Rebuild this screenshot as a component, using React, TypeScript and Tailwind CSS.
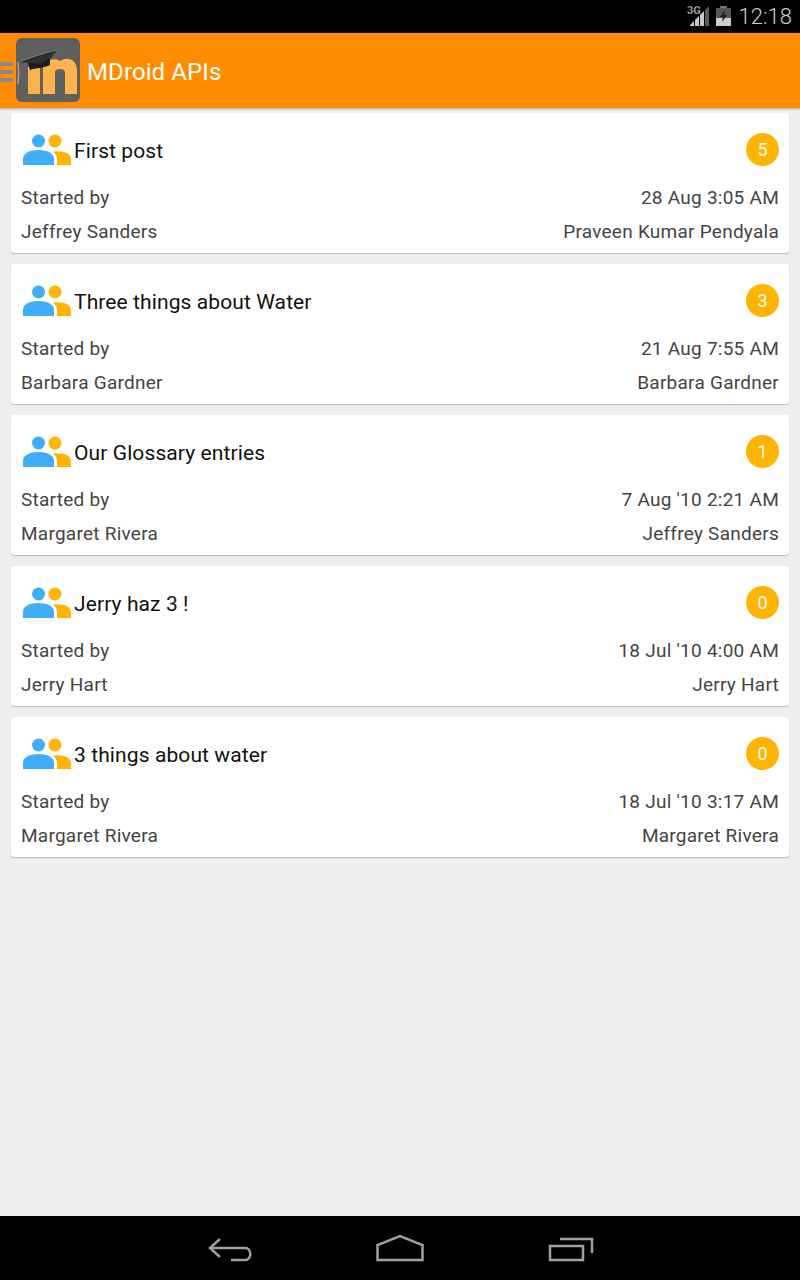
const THREADS = [
  { title: 'First post', count: 5, date: '28 Aug 3:05 AM', starter: 'Jeffrey Sanders', last: 'Praveen Kumar Pendyala' },
  { title: 'Three things about Water', count: 3, date: '21 Aug 7:55 AM', starter: 'Barbara Gardner', last: 'Barbara Gardner' },
  { title: 'Our Glossary entries', count: 1, date: "7 Aug '10 2:21 AM", starter: 'Margaret Rivera', last: 'Jeffrey Sanders' },
  { title: 'Jerry haz 3 !', count: 0, date: "18 Jul '10 4:00 AM", starter: 'Jerry Hart', last: 'Jerry Hart' },
  { title: '3 things about water', count: 0, date: "18 Jul '10 3:17 AM", starter: 'Margaret Rivera', last: 'Margaret Rivera' },
];

function PeopleIcon() {
  return (
    <svg width="48" height="31" viewBox="0 0 48 31" className="shrink-0">
      <circle cx="15.5" cy="7" r="6.5" fill="#3fadf8" />
      <path d="M0 31v-6c0-5 5-9 15.5-9S31 20 31 25v6z" fill="#3fadf8" />
      <circle cx="32" cy="7" r="6.5" fill="#ffb400" />
      <path d="M30 18c1-.6 2-.7 4-.7 9 0 14 3 14 8V31H34v-6c0-3-1.500-5.500-4-7z" fill="#ffb400" />
    </svg>
  );
}

function MoodleLogo() {
  return (
    <svg width="64" height="64" viewBox="0 0 64 64" className="block">
      <rect width="64" height="64" rx="6" fill="#606060" />
      {/* the m */}
      <path d="M12 56V29h12v27z" fill="#fdb44f" />
      <path d="M27 56V26C33 21 40 20 44 23 49 19 61 19 61 33V56H49V34C49 30 39 30 39 34V56z" fill="#fdb44f" />
      {/* the cap */}
      <path d="M12 25 L14 32 C20 30 28 30 34 27 L34 20 Z" fill="#1c1c1c" />
      <path d="M2 24 L41 12 L35 20 L24 26 Z" fill="#2e2e2e" />
      <path d="M2 24 L28 15 L41 12" stroke="#777777" strokeWidth="1" fill="none" />
      <path d="M2 24 C3 32 3 38 2 46" stroke="#b0a080" strokeWidth="1.500" fill="none" />
    </svg>
  );
}

function Status() {
  return (
    <div className="flex h-[33px] items-center justify-end bg-black pr-2">
      <svg width="24" height="22" viewBox="0 0 24 22" className="mr-[6px] -mt-[1px]">
        <path d="M4 21h4v-5l-4 4z M9 21h4V11l-4 4z M14 21h4V6l-4 4z" fill="#c8c8c8" />
        <path d="M19 21h4V1l-4 4z" fill="#5a5a5a" />
        <text x="1" y="9" fontSize="11" fontWeight="700" fill="#c8c8c8" stroke="#000000" strokeWidth="0.300" fontFamily="Roboto, sans-serif">3G</text>
      </svg>
      <svg width="15" height="20" viewBox="0 0 15 20" className="mr-[8px] -mt-[1px]">
        <rect x="4" y="0" width="7" height="2" fill="#777777" />
        <rect x="0" y="2" width="15" height="18" fill="#555555" />
        <rect x="0" y="12" width="15" height="8" fill="#cccccc" />
        <path d="M9 4 4 11h3l-1 5 5-7H8z" fill="#1a1a1a" />
      </svg>
      <span className="font-['Roboto',sans-serif] text-[22px] font-light leading-none text-[#cfcfcf]">12:18</span>
    </div>
  );
}

function ThreadCard({ thread }: { thread: (typeof THREADS)[number] }) {
  return (
    <div className="h-[140px] rounded-[3px] bg-white px-[10px] shadow-[0_1px_1px_#bbbbbb]">
      <div className="flex h-[73px] items-center">
        <div className="ml-[2px] mr-[3px]">
          <PeopleIcon />
        </div>
        <span className="flex-1 pt-[5px] text-[21px] tracking-[0.1px] text-[#111111]">{thread.title}</span>
        <span className="flex h-[33px] w-[33px] items-center justify-center rounded-full bg-[#ffb400] text-[18px] text-white">
          {thread.count}
        </span>
      </div>
      <div className="mt-[3px] flex h-[18px] items-center justify-between text-[19px] tracking-[0.25px] text-[#444444]">
        <span>Started by</span>
        <span>{thread.date}</span>
      </div>
      <div className="mt-[16px] flex h-[18px] items-center justify-between text-[19px] tracking-[0.25px] text-[#444444]">
        <span>{thread.starter}</span>
        <span>{thread.last}</span>
      </div>
    </div>
  );
}

export default function App() {
  return (
    <div className="flex h-[1280px] w-[800px] flex-col bg-[#eeeeee] font-['Roboto',sans-serif]">
      <Status />

      {/* Action bar */}
      <div className="relative flex h-[75px] items-center bg-[#ff8c00] pl-[16px] shadow-[0_1px_2px_#aaaaaa]">
        <div className="absolute left-0 top-[29px] flex w-[13px] flex-col gap-[4px]">
          <div className="h-[4px] bg-[#8a8a8a]" />
          <div className="h-[4px] bg-[#8a8a8a]" />
          <div className="h-[4px] bg-[#8a8a8a]" />
        </div>
        <div className="relative -mt-[1px]">
          <MoodleLogo />
        </div>
        <span className="ml-[7px] pt-[2px] text-[24px] tracking-[0.1px] text-white">MDroid APIs</span>
      </div>

      {/* Discussions */}
      <div className="flex flex-1 flex-col gap-[11px] px-[11px] pt-[5px]">
        {THREADS.map((thread) => (
          <ThreadCard key={thread.title} thread={thread} />
        ))}
      </div>

      {/* Nav bar */}
      <div className="flex h-[64px] items-center bg-black">
        <svg width="800" height="64" viewBox="0 0 800 64" fill="none" stroke="#a0a0a0" strokeWidth="2.500">
          <path d="M220 23l-10 9 10 9" />
          <path d="M210 32h35c7 0 7 12 0 12h-14" />
          <path d="M377.500 44V29l22.500-9 22.500 9v15z" />
          <path d="M550 30h33v14h-33z" />
          <path d="M560 23h32v14" />
        </svg>
      </div>
    </div>
  );
}
